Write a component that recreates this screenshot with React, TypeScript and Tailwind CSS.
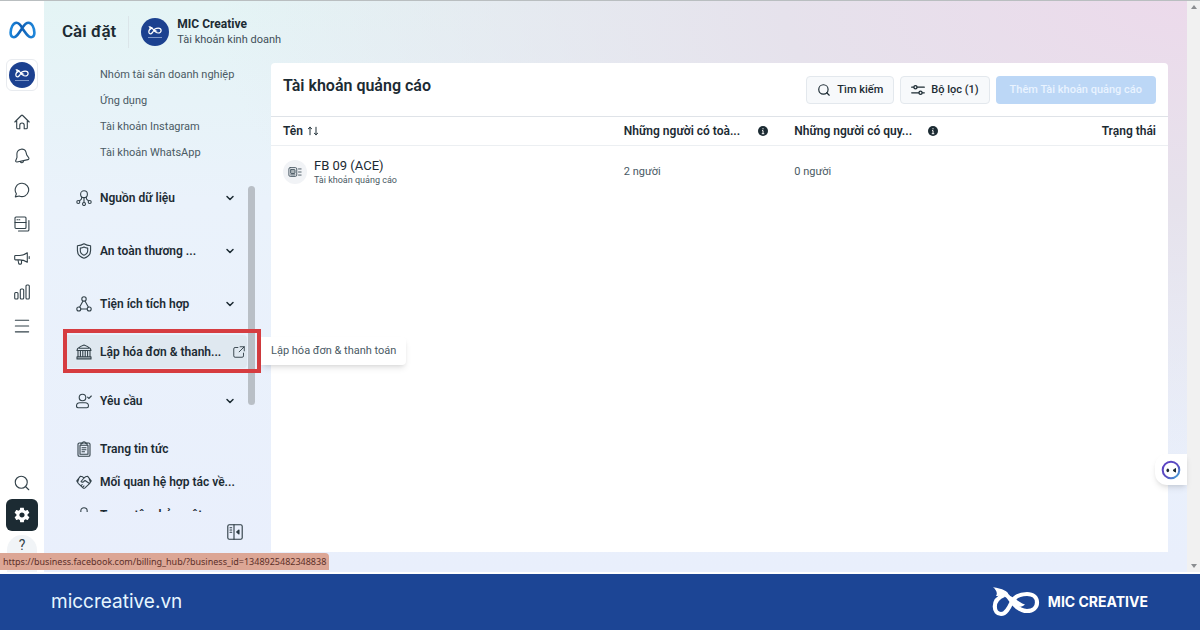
import React from 'react';
import { ChevronDown, Menu, Search } from 'lucide-react';
import { IoMdSettings } from 'react-icons/io';

type IconProps = { className?: string };

const Svg: React.FC<{ className?: string; children: React.ReactNode }> = ({ className = 'size-4', children }) => (
  <svg
    viewBox="0 0 16 16"
    className={className}
    fill="none"
    stroke="currentColor"
    strokeWidth="1.1"
    strokeLinecap="round"
    strokeLinejoin="round"
    aria-hidden="true"
  >
    {children}
  </svg>
);

const HomeIcon = () => (
  <Svg>
    <path d="M.8 8 7.3 1.5a1 1 0 0 1 1.4 0L15.2 8M2.7 6.8v7a1 1 0 0 0 1 1h2.1v-3.6a2.2 2.2 0 0 1 4.4 0v3.6h2.1a1 1 0 0 0 1-1v-7" />
  </Svg>
);

const BellIcon = () => (
  <Svg>
    <path d="M6.8 1.3a4 4 0 0 1 5.1 2.6l.8 3 2 2.8c.5.8.2 1.7-.7 1.9L3 14c-.9.2-1.6-.5-1.3-1.3L3 9.4 2.9 6c0-2.400 1.500-4 3.900-4.700ZM6.300 13.500c.5 1.500 2.900 1.900 3.600-.8" />
  </Svg>
);

const ChatIcon = () => (
  <Svg>
    <path d="M8.200 1.200a6.700 6.700 0 1 1-3 12.800L1.300 14.900l1.100-3.200A6.700 6.700 0 0 1 8.200 1.200Z" />
  </Svg>
);

const PagesIcon = () => (
  <Svg>
    <rect x="1" y="1" width="11" height="11.500" rx="1" />
    <path d="M1 6.500h11M3 3.800h.8M5 3.800h.8M14.900 4.500v9.300a1.200 1.200 0 0 1-1.200 1.200H4.500" />
  </Svg>
);

const MegaphoneIcon = () => (
  <Svg>
    <path d="M1.500 5.500h4.200c3 0 5.200-1 7.600-2.700v9.400c-2.400-1.500-4.600-2.300-7.600-2.300H1.500a.8.8 0 0 1-.8-.8V6.300a.8.8 0 0 1 .8-.8ZM4 10l.7 3.500a.8.8 0 0 0 .8.600h1.200a.8.8 0 0 0 .8-.8V10M15.200 6.500v2" />
  </Svg>
);

const BarsIcon = () => (
  <Svg>
    <rect x=".7" y="8.500" width="3.300" height="6.500" rx="1" />
    <rect x="6.300" y="5" width="3.400" height="10" rx="1" />
    <rect x="12" y="1" width="3.300" height="14" rx="1" />
  </Svg>
);

const DataIcon = () => (
  <Svg>
    <circle cx="8" cy="4.200" r="3.400" />
    <path d="M8 7.600v4.800M5.700 6.900v1.200c0 1-.6 1.600-1.500 2.100l-.6.400M10.300 6.900v1.200c0 1 .6 1.600 1.500 2.100l.6.400" />
    <circle cx="2.300" cy="12" r="1.500" />
    <circle cx="8" cy="14" r="1.500" />
    <circle cx="13.700" cy="12" r="1.500" />
  </Svg>
);

const ShieldIcon = () => (
  <Svg>
    <path d="M8 .8c1.900 1.300 4.200 1.900 6.600 2v4.700c0 3.600-2.400 6.400-6.600 7.800-4.200-1.400-6.600-4.200-6.600-7.800V2.800C3.800 2.700 6.100 2.100 8 .8Z" />
    <path d="M8 4c1.200.7 2.300 1 3.700 1.100v2.600c0 2-1.300 3.500-3.700 4.500-2.400-1-3.700-2.500-3.700-4.500V5.100C5.700 5 6.800 4.700 8 4Z" />
  </Svg>
);

const IntegrationIcon = () => (
  <Svg>
    <circle cx="8" cy="3" r="2.200" />
    <circle cx="2.800" cy="13" r="2" />
    <circle cx="13.200" cy="13" r="2" />
    <path d="M7 5 3.700 11.100M9 5l3.300 6.100M4.900 13h6.200" />
  </Svg>
);

const BankIcon = () => (
  <Svg>
    <path d="M1 6.500 1.600 4.600C3.400 3 5.700 1.600 8 1c2.300.6 4.600 2 6.400 3.600l.6 1.900ZM3.500 4.300h9M1 14.900h14v-2H1ZM2 6.500v6.400M4.400 6.500v6.400M6.800 6.500v6.400M9.200 6.500v6.400M11.600 6.500v6.400M14 6.500v6.400" />
  </Svg>
);

const RequestIcon = () => (
  <Svg>
    <circle cx="6.500" cy="4.500" r="3.300" />
    <path d="M3.800 9.800h5.400c1.900 0 3.300 1.400 3.300 3.300 0 1-.7 1.700-1.700 1.700H2.200c-1 0-1.700-.7-1.700-1.700 0-1.900 1.400-3.300 3.300-3.300ZM11.600 4.200l1.200 1.300 2.500-2.500" />
  </Svg>
);

const ClipboardIcon = () => (
  <Svg>
    <rect x="2" y="2" width="12" height="13.300" rx="1.300" />
    <path d="M5 4.200h6V2.300H9.500a1.500 1.500 0 0 0-3 0H5ZM5 4.200H4v9h8v-9h-1M6 6.700h4M6 8.700h4M6 10.700h2.500" />
  </Svg>
);

const PartnerIcon = () => (
  <Svg>
    <path d="m4.300 2.300 2.300.5L8 4l1.400-1.200 2.300-.5 3.500 4.600-1.400 2.400L9 13.800c-.6.500-1.400.5-2 0L2.200 9.300.8 6.900ZM8 4 5 7.500c.8 1 2.200.8 3-.2l1-.8 4.500 3M2.700 5l-1 2.800M13.300 5l1 2.800M6.200 10.500l-1 1.200M8 11.800l-.9 1" />
  </Svg>
);

const LockIcon = () => (
  <Svg>
    <circle cx="8" cy="4" r="3.200" />
    <path d="M2 15c0-3 2-5 6-5s6 2 6 5" />
  </Svg>
);

const ExternalIcon = () => (
  <Svg className="size-3 shrink-0">
    <path d="M6.500 2H2.800A1.800 1.800 0 0 0 1 3.800v9.400A1.800 1.800 0 0 0 2.800 15h9.400a1.800 1.800 0 0 0 1.800-1.800V9.500M9.500 1H15v5.500M15 1 8.200 7.800" />
  </Svg>
);

const CollapseIcon = () => (
  <Svg>
    <rect x=".8" y=".8" width="14.400" height="14.400" rx="1.500" />
    <path d="M7 .8v14.400M3 3.800h1.700M3 6h1.700M3 8.200h1.700" />
    <path d="m12 6-2.300 2 2.300 2Z" fill="currentColor" />
  </Svg>
);

const FilterIcon = () => (
  <Svg className="size-[14px]">
    <path d="M.8 4.800h2.400M7 4.800h8.200M.8 11.200H9M12.800 11.200h2.400" strokeWidth="1.400" />
    <circle cx="5.100" cy="4.800" r="1.800" strokeWidth="1.400" />
    <circle cx="10.900" cy="11.200" r="1.800" strokeWidth="1.400" />
  </Svg>
);

const SortIcon = () => (
  <Svg className="size-3">
    <path d="M4 13V3M1.800 5 4 3l2.200 2M12 3v10M9.800 11l2.200 2 2.200-2" strokeWidth="1.300" />
  </Svg>
);

const AdAccountIcon = () => (
  <Svg className="size-[14px]">
    <rect x="1" y="3" width="9" height="10" rx="1.500" />
    <rect x="3" y="5.200" width="5" height="4.500" rx=".5" fill="currentColor" fillOpacity=".4" />
    <path d="M3 11.300h5M12 4.500h3M12 8h3M12 11.500h3" />
  </Svg>
);

const InfoIcon = () => (
  <svg viewBox="0 0 16 16" className="size-2.5 shrink-0" aria-hidden="true">
    <circle cx="8" cy="8" r="8" fill="#1c2b33" />
    <path d="M8 3.500v1.800M6.500 7.300H8v5M6 12.300h4" stroke="#fff" strokeWidth="1.600" />
  </svg>
);

const KnotLogo: React.FC<IconProps> = ({ className }) => (
  <svg viewBox="0 0 48 30" className={className} fill="none" aria-hidden="true">
    <path
      d="M12 8C6 10.500 2.800 14.500 2.800 19.500c0 4.500 2.500 7.500 6.200 7.500 5 0 8-6 10.500-11.500C22 10 28 7 35 7c6 0 10 3.500 10 8.500S41 24 35 24c-8 0-13-6-17-12-3-4-7-7-12-8"
      stroke="#fff"
      strokeWidth="4.200"
    />
    <path d="M1 0c4 1.500 10 1 15 6l1 5C11 7 9 9 4 9 6 6 4 3 1 0ZM17 9c5 .5 8 5.500 16 8.500-3 3-8 3-12 .5Z" fill="#fff" />
  </svg>
);

const Avatar: React.FC<IconProps> = ({ className = '' }) => (
  <span className={`flex shrink-0 flex-col items-center justify-center gap-0.5 rounded-full bg-[#1c4190] ${className}`}>
    <KnotLogo className="w-[14px]" />
    <span className="h-px w-3.5 bg-[#7f98c9]" />
  </span>
);

const MetaLogo = () => (
  <svg viewBox="0 0 27 18" className="w-[27px]" fill="none" aria-label="Meta">
    <defs>
      <linearGradient id="meta" x1="0" x2="1" y1="0" y2="0">
        <stop offset="0" stopColor="#1a86dc" />
        <stop offset=".45" stopColor="#0f5fb4" />
        <stop offset="1" stopColor="#1f86da" />
      </linearGradient>
    </defs>
    <path
      d="M13.500 7.500C11.500 4 10 1.800 7.500 1.800 4 1.800 1.600 7 1.600 11.800c0 2.800 1.200 4.400 3.300 4.400 2.600 0 4.200-3 8.600-9.600 2-3 3.500-4.800 6-4.800 3.500 0 5.900 5.200 5.900 10 0 2.800-1.200 4.400-3.300 4.400-2.800 0-4.300-2.700-8.600-8.700Z"
      stroke="url(#meta)"
      strokeWidth="2.600"
    />
  </svg>
);

const railItems = [
  { label: 'Trang chủ', icon: <HomeIcon /> },
  { label: 'Thông báo', icon: <BellIcon /> },
  { label: 'Hộp thư', icon: <ChatIcon /> },
  { label: 'Nội dung', icon: <PagesIcon /> },
  { label: 'Quảng cáo', icon: <MegaphoneIcon /> },
  { label: 'Thông tin chi tiết', icon: <BarsIcon /> },
  { label: 'Tất cả công cụ', icon: <Menu className="size-5" strokeWidth={1.3} /> },
];

const assetLinks = ['Nhóm tài sản doanh nghiệp', 'Ứng dụng', 'Tài khoản Instagram', 'Tài khoản WhatsApp'];

const Rail = () => (
  <nav className="flex w-11 shrink-0 flex-col items-center overflow-hidden bg-white pt-5 text-[#33424a]">
    <MetaLogo />
    <button aria-label="MIC Creative" className="mt-5 flex size-8 shrink-0 items-center justify-center rounded-md border border-[#e8ebef]">
      <Avatar className="size-[26px]" />
    </button>
    <div className="mt-3.5 flex flex-col">
      {railItems.map((item) => (
        <button key={item.label} aria-label={item.label} className="flex h-[34px] w-8 items-center justify-center">
          {item.icon}
        </button>
      ))}
    </div>
    <div className="mt-auto flex shrink-0 flex-col items-center">
      <button aria-label="Tìm kiếm" className="flex h-8 w-8 items-center justify-center">
        <Search className="size-[18px]" strokeWidth={1.5} />
      </button>
      <button aria-label="Cài đặt" className="flex size-8 items-center justify-center rounded-md bg-[#1c2b33] text-white">
        <IoMdSettings className="size-[18px]" />
      </button>
      <button aria-label="Trợ giúp" className="mt-1 flex h-[37px] w-[30px] items-start justify-center rounded-t-full bg-[#f1f4f7] pt-0.5 text-sm leading-4">
        ?
      </button>
    </div>
  </nav>
);

type NavRowProps = {
  icon: React.ReactNode;
  label: string;
  className?: string;
  expandable?: boolean;
};

const NavRow: React.FC<NavRowProps> = ({ icon, label, className = '', expandable }) => (
  <button className={`flex h-[33px] w-full items-center gap-2 pr-[29px] pl-8 text-left text-xs font-semibold whitespace-nowrap ${className}`}>
    <span className="w-4 shrink-0 text-[#33424a]">{icon}</span>
    <span>{label}</span>
    {expandable && <ChevronDown className="mr-1.5 ml-auto size-3 shrink-0" strokeWidth={3} />}
  </button>
);

const Sidebar = () => (
  <aside className="flex w-[227px] shrink-0 flex-col">
    <div className="relative min-h-0 flex-1 overflow-x-visible overflow-y-clip">
      <ul className="pl-14">
        {assetLinks.map((link) => (
          <li key={link} className="mb-0.5 flex h-6 items-center text-[11px] text-[#4a5a64]">
            <a href="#">{link}</a>
          </li>
        ))}
      </ul>
      <NavRow className="mt-4" icon={<DataIcon />} label="Nguồn dữ liệu" expandable />
      <NavRow className="mt-5" icon={<ShieldIcon />} label="An toàn thương ..." expandable />
      <NavRow className="mt-5" icon={<IntegrationIcon />} label="Tiện ích tích hợp" expandable />

      <div className="relative mt-[15px]">
        <a href="#" className="mr-6 ml-5 flex h-[33px] items-center gap-2 rounded bg-[#dfe8f0] pl-3 text-xs font-semibold whitespace-nowrap">
          <span className="w-4 shrink-0 text-[#33424a]">
            <BankIcon />
          </span>
          <span className="w-[125px]">Lập hóa đơn &amp; thanh...</span>
          <ExternalIcon />
        </a>
        <div className="absolute -top-1.5 right-2.5 left-[19px] z-10 h-11 border-4 border-[#d63c40]" />
        <div
          role="tooltip"
          className="absolute top-0.5 left-[217px] z-10 flex h-7 items-center rounded-r bg-white px-2.5 text-[11px] whitespace-nowrap text-[#4a5a64] shadow-md"
        >
          Lập hóa đơn &amp; thanh toán
        </div>
      </div>

      <NavRow className="mt-4" icon={<RequestIcon />} label="Yêu cầu" expandable />
      <NavRow className="mt-[15px]" icon={<ClipboardIcon />} label="Trang tin tức" />
      <NavRow icon={<PartnerIcon />} label="Mối quan hệ hợp tác về..." />
      <NavRow icon={<LockIcon />} label="Trung tâm bảo mật" />
      <div className="absolute top-[123px] right-4 h-[219px] w-[7px] rounded-full bg-[#b9bfc6]" />
    </div>
    <div className="flex h-10 items-center justify-end pr-7 text-[#2b3a42]">
      <button aria-label="Thu gọn">
        <CollapseIcon />
      </button>
    </div>
  </aside>
);

const AccountsCard = () => (
  <section className="min-w-0 flex-1 rounded-t bg-white">
    <div className="flex h-[54px] items-start justify-between border-b border-[#dfe3e8] px-3 pt-[13px]">
      <h2 className="text-base leading-5 font-semibold">Tài khoản quảng cáo</h2>
      <div className="flex gap-1.5 text-[11px] font-medium">
        <button className="flex h-7 items-center gap-1.5 rounded border border-[#e3e8ed] bg-[#f7f9fb] px-2.5">
          <Search className="size-[14px]" strokeWidth={2} />
          Tìm kiếm
        </button>
        <button className="flex h-7 items-center gap-1.5 rounded border border-[#e3e8ed] bg-[#f7f9fb] px-2.5">
          <FilterIcon />
          Bộ lọc (1)
        </button>
        <button className="h-7 rounded bg-[#bcd7f6] px-3.5 text-[#e9f3ff]">Thêm Tài khoản quảng cáo</button>
      </div>
    </div>
    <table className="w-full table-fixed text-left text-[11px]">
      <thead>
        <tr className="h-7 border-b border-[#eceff2] text-xs">
          <th className="w-[38%] px-3 font-semibold">
            <span className="flex items-center gap-1">
              Tên <SortIcon />
            </span>
          </th>
          <th className="w-[19%] px-3 font-semibold">
            <span className="flex items-center gap-3 whitespace-nowrap">
              <span className="w-[122px]">Những người có toà...</span>
              <InfoIcon />
            </span>
          </th>
          <th className="w-[19%] px-3 font-semibold">
            <span className="flex items-center gap-3 whitespace-nowrap">
              <span className="w-[122px]">Những người có quy...</span>
              <InfoIcon />
            </span>
          </th>
          <th className="px-3 text-right font-semibold">Trạng thái</th>
        </tr>
      </thead>
      <tbody>
        <tr className="h-[54px] text-[#4a5a64]">
          <td className="px-3">
            <div className="flex items-center gap-[7px]">
              <span className="flex size-6 items-center justify-center rounded-full bg-[#f1f3f6]">
                <AdAccountIcon />
              </span>
              <div>
                <p className="text-[13px] leading-4 text-[#1c2b33]">FB 09 (ACE)</p>
                <p className="text-[9px] leading-3">Tài khoản quảng cáo</p>
              </div>
            </div>
          </td>
          <td className="px-3">2 người</td>
          <td className="px-3">0 người</td>
          <td />
        </tr>
      </tbody>
    </table>
  </section>
);

const App: React.FC = () => {
  return (
    <div className="flex h-screen flex-col font-['Roboto','Noto_Sans',sans-serif] text-[#1c2b33]">
      <div className="relative flex min-h-0 flex-1 border-t border-[#b9bec0] border-b-2 border-b-white">
        <Rail />
        <div className="relative flex min-w-0 flex-1 flex-col bg-[radial-gradient(ellipse_at_top_right,#ecdaeb_0%,#e6e2ec_25%,transparent_60%),linear-gradient(to_bottom,#e4f4f5_0%,#eaf2fb_35%,#e9effc_100%)]">
          <header className="flex h-[62px] shrink-0 items-center pl-[18px]">
            <h1 className="text-[17px] font-semibold">Cài đặt</h1>
            <span className="mx-3 h-8 w-px bg-[#dbe5e9]" />
            <Avatar className="size-7" />
            <div className="ml-2">
              <p className="text-xs leading-4 font-bold">MIC Creative</p>
              <p className="text-[11px] leading-4 text-[#3f4f58]">Tài khoản kinh doanh</p>
            </div>
          </header>
          <div className="flex min-h-0 flex-1 pr-[19px] pb-5">
            <Sidebar />
            <AccountsCard />
          </div>
          <button aria-label="Trợ lý" className="absolute right-0 bottom-[87px] flex h-[31px] w-8 items-center justify-center rounded-l-xl bg-white shadow-md">
            <svg viewBox="0 0 20 20" className="size-5" fill="none" aria-hidden="true">
              <defs>
                <linearGradient id="bot" x1="0" x2="1" y1="0" y2="1">
                  <stop offset="0" stopColor="#5b3fc4" />
                  <stop offset=".6" stopColor="#5a4fc0" />
                  <stop offset="1" stopColor="#3fb6dc" />
                </linearGradient>
              </defs>
              <circle cx="10" cy="10" r="8.300" stroke="url(#bot)" strokeWidth="2" />
              <ellipse cx="6.800" cy="10.300" rx="1.300" ry="1.900" fill="#1c2b33" />
              <path d="m14.500 8.500-2.500 1.900 2.500 1.700Z" fill="#1c2b33" stroke="#1c2b33" strokeLinejoin="round" />
            </svg>
          </button>
        </div>
        <div className="flex w-[13px] shrink-0 flex-col items-center justify-between bg-[#f1f1f1] py-1 text-[#8a8d90]">
          <svg viewBox="0 0 6 4" className="w-1.5" aria-hidden="true">
            <path d="M3 0 6 4H0Z" fill="currentColor" />
          </svg>
          <svg viewBox="0 0 6 4" className="w-1.5" aria-hidden="true">
            <path d="M3 4 0 0h6Z" fill="currentColor" />
          </svg>
        </div>
        <div className="absolute bottom-0.5 left-0 flex h-[17px] items-center rounded-tr bg-[#dca695] px-[3px] font-['Noto_Sans',sans-serif] text-[9px] text-[#5d3029]">
          https://business.facebook.com/billing_hub/?business_id=1348925482348838
        </div>
      </div>
      <footer className="flex h-14 shrink-0 items-center justify-between bg-[#1c4595] pr-[52px] pl-[51px] font-['Inter','Liberation_Sans',sans-serif]">
        <a href="#" className="text-[19px] text-[#e6f6ff]">
          miccreative.vn
        </a>
        <div className="flex items-center gap-2 text-sm font-bold text-white">
          <KnotLogo className="w-12" />
          MIC CREATIVE
        </div>
      </footer>
    </div>
  );
};

export default App;
